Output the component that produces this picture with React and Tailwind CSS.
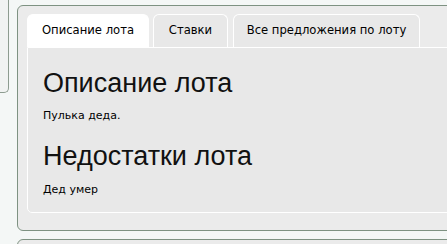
import React, { useState } from 'react';

const tabs = ['Описание лота', 'Ставки', 'Все предложения по лоту'];
const tabWidths = ['w-[122px]', 'w-[75px]', 'w-[187px]'];

export default function App() {
  const [active, setActive] = useState(0);

  return (
    <div className="w-[447px] h-[244px] overflow-hidden bg-[#f4f7f6] flex items-start font-['DejaVu_Sans',sans-serif] text-black">
      {/* left sidebar, cut by the window */}
      <div className="w-[9px] h-[93px] shrink-0 bg-[#f1f3f2] border-r border-b border-[#8d9c90] rounded-br-[5px]" />

      <div className="ml-[8px] shrink-0 w-[440px] flex flex-col">
        {/* lot panel */}
        <div className="mt-[5px] h-[226px] bg-[#ebebeb] border border-[#7e9282] rounded-[6px] pt-[8px] pl-[9px]">
          {/* tabs */}
          <div className="flex gap-[4px] h-[33px]">
            {tabs.map((t, i) => (
              <button
                key={t}
                onClick={() => setActive(i)}
                className={`${tabWidths[i]} ${i === 2 ? 'ml-[1px]' : ''} shrink-0 h-[33px] rounded-t-[6px] text-[11.6px] text-center border border-b-0 ${
                  active === i ? 'bg-white border-white' : 'bg-[#e8e8e8] border-white'
                }`}
              >
                {t}
              </button>
            ))}
          </div>

          {/* tab content */}
          <div className="h-[166px] bg-[#e8e8e8] border border-white rounded-bl-[5px] pl-[15px] pt-[18px]">
            <h1 className="font-['Liberation_Sans',sans-serif] text-[27px] leading-[34px] text-[#111]">Описание лота</h1>
            <p className="mt-[9px] text-[11px] leading-[14px]">Пулька деда.</p>
            <h1 className="mt-[16px] font-['Liberation_Sans',sans-serif] text-[27px] leading-[34px] text-[#111]">Недостатки лота</h1>
            <p className="mt-[10px] text-[11px] leading-[14px]">Дед умер</p>
          </div>
        </div>

        {/* next panel */}
        <div className="mt-[8px] h-[40px] bg-[#ebebeb] border border-[#7e9282] rounded-[6px]" />
      </div>
    </div>
  );
}
